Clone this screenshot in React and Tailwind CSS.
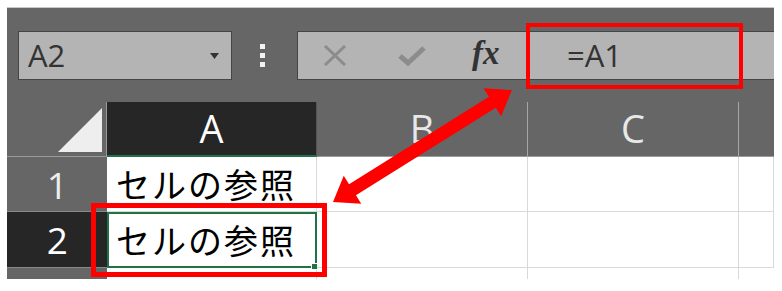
import React from 'react';

const latin = { fontFamily: '"Open Sans", "Noto Sans", sans-serif' };
const jp = { fontFamily: '"Noto Sans CJK JP", "Noto Sans", sans-serif' };

const ColHeader = ({ label, active }) => (
  <div
    className={`flex items-center justify-center border-b border-r text-[38px] leading-none ${
      active
        ? 'bg-[#262626] text-white border-b-2 border-b-[#217346] border-r-[#555]'
        : 'bg-[#666] text-[#e8e8e8] border-b-[#9a9a9a] border-r-[#a6a6a6]'
    }`}
    style={latin}
  >
    <span className="-mt-[2px]">{label}</span>
  </div>
);

const RowHeader = ({ label, active }) => (
  <div
    className={`flex items-center justify-end pr-[39px] border-b border-[#8a8a8a] text-[37px] leading-none ${
      active ? 'bg-[#262626] text-white' : 'bg-[#666] text-[#eeeeee]'
    }`}
    style={latin}
  >
    {label}
  </div>
);

const Cell = ({ children, selected }) => (
  <div
    className={`relative flex items-center border-b border-r border-[#d9d9d9] bg-white ${
      selected ? 'outline-2 outline-[#217346] -outline-offset-2' : ''
    }`}
  >
    {children && (
      <span className="pl-[9px] text-[34px] leading-none text-black tracking-[2px]" style={jp}>
        {children}
      </span>
    )}
    {selected && (
      <div className="absolute right-[-2px] bottom-[-3px] w-[7px] h-[7px] bg-[#217346] border border-white" />
    )}
  </div>
);

export default function App() {
  return (
    <div className="relative w-[782px] h-[291px] bg-white overflow-hidden">
      <div className="absolute left-[7px] top-[7px] w-[767px] border-t border-[#c8c8c8] bg-[#666]">
        {/* toolbar */}
        <div className="h-[94px] flex items-start pt-[23px] pl-[11px]">
          <div className="w-[214px] h-[49px] border border-[#454545] bg-[#b4b4b4] flex items-center justify-between pl-[9px] pr-[12px]">
            <span className="text-[31px] leading-none text-[#333]" style={latin}>A2</span>
            <svg width="9" height="6" viewBox="0 0 9 6">
              <path d="M0 0 H9 L4.5 6 Z" fill="#333" />
            </svg>
          </div>
          <div className="ml-[28px] mt-[13px] flex flex-col gap-[4px]">
            <div className="w-[5px] h-[5px] bg-[#f2f2f2]" />
            <div className="w-[5px] h-[5px] bg-[#f2f2f2]" />
            <div className="w-[5px] h-[5px] bg-[#f2f2f2]" />
          </div>
          <div className="ml-[32px] w-[477px] h-[49px] border border-r-0 border-[#454545] bg-[#b4b4b4] flex">
            <div className="w-[228px] flex items-center">
              <svg className="ml-[25px]" width="24" height="21" viewBox="0 0 24 21">
                <path d="M2 1 L22 20 M22 1 L2 20" stroke="#8c8c8c" strokeWidth="3" fill="none" />
              </svg>
              <svg className="ml-[51px]" width="28" height="23" viewBox="0 0 28 23">
                <path d="M2 12 L10 19 L26 4" stroke="#8c8c8c" strokeWidth="5" fill="none" />
              </svg>
              <span
                className="ml-[46px] text-[33px] leading-none italic font-bold text-[#333] -mt-[4px]"
                style={{ fontFamily: '"Liberation Serif", serif' }}
              >
                fx
              </span>
            </div>
            <div className="flex-1 border-l border-[#555] flex items-center pl-[40px]">
              <span className="text-[31px] leading-none text-[#333]" style={latin}>=A1</span>
            </div>
          </div>
        </div>

        {/* grid */}
        <div className="grid grid-cols-[100px_210px_211px_211px_35px] grid-rows-[55px_55px_56px_11px]">
          <div className="relative bg-[#666] border-b border-r border-[#9a9a9a]">
            <svg className="absolute left-[51px] top-[6px]" width="44" height="44" viewBox="0 0 44 44">
              <path d="M44 0 V44 H0 Z" fill="#eeeeee" />
            </svg>
          </div>
          <ColHeader label="A" active />
          <ColHeader label="B" />
          <ColHeader label="C" />
          <div className="bg-[#666] border-b border-[#9a9a9a]" />

          <RowHeader label="1" />
          <Cell>セルの参照</Cell>
          <Cell />
          <Cell />
          <Cell />

          <RowHeader label="2" active />
          <Cell selected>セルの参照</Cell>
          <Cell />
          <Cell />
          <Cell />

          <div className="bg-[#666]" />
          <div className="bg-white border-r border-[#d9d9d9]" />
          <div className="bg-white border-r border-[#d9d9d9]" />
          <div className="bg-white border-r border-[#d9d9d9]" />
          <div className="bg-white" />
        </div>
      </div>

      {/* annotations */}
      <div className="absolute left-[526px] top-[23px] w-[217px] h-[66px] border-4 border-[#ff0000]" />
      <div className="absolute left-[91px] top-[203px] w-[236px] h-[74px] border-[5px] border-[#ff0000]" />
      <svg className="absolute left-0 top-0" width="782" height="291" viewBox="0 0 782 291">
        <g transform="translate(333,202) rotate(-32.03)">
          <polygon
            points="0,0 23,-16.5 23,-6.5 188,-6.5 188,-16.5 211,0 188,16.5 188,6.5 23,6.5 23,16.5"
            fill="#ff0000"
          />
        </g>
      </svg>
    </div>
  );
}
